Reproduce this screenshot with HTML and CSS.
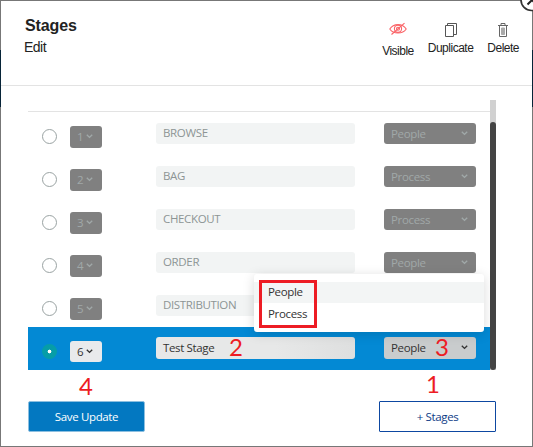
FILE: index.html
```html
<!DOCTYPE html>
<html lang="en">
<head>
<meta charset="utf-8">
<title>Stages</title>
<link rel="stylesheet" href="styles.css">
</head>
<body>
<svg class="defs" width="0" height="0"><symbol id="chev" viewBox="0 0 7 5"><path d="M.8 .8 3.5 3.4 6.2 .8" fill="none" stroke="currentColor" stroke-width="1.4"/></symbol></svg>
<main class="modal">
  <header class="header">
    <div class="titles"><h1>Stages</h1><p>Edit</p></div>
    <div class="actions">
      <div class="action visible">
        <svg width="18" height="14" viewBox="0 0 18 14" fill="none" stroke="#fa6468" stroke-width="1.1"><path d="M.8 7C4.5 1.1 13.500 1.100 17.200 7C13.500 12.400 4.500 12.400.8 7Z"/><circle cx="9" cy="6.800" r="3.600"/><circle cx="9" cy="6.800" r="1.500"/><path d="M2.500 12.500 15.500 1.200"/></svg>
        <span>Visible</span>
      </div>
      <div class="action duplicate">
        <svg width="12" height="14" viewBox="0 0 12 14" fill="none" stroke="#555" stroke-width="1"><path d="M.5 2.500h8v11h-8zM2.500 2V.5h9v11H9"/></svg>
        <span>Duplicate</span>
      </div>
      <div class="action delete">
        <svg width="10" height="14" viewBox="0 0 10 14" fill="none" stroke="#666"><path d="M0 2.500h10M3 2V.5h4V2M1.500 3v10.500h7V3"/><path d="M3.500 5h3v6.500h-3z" fill="#aaa" stroke="#aaa"/></svg>
        <span>Delete</span>
      </div>
    </div>
  </header>
  <section class="list">
    <div class="rows">
      <div class="row"><i class="radio"></i><div class="num">1<svg><use href="#chev"/></svg></div><div class="name">BROWSE</div><div class="type">People<svg><use href="#chev"/></svg></div></div>
      <div class="row"><i class="radio"></i><div class="num">2<svg><use href="#chev"/></svg></div><div class="name">BAG</div><div class="type">Process<svg><use href="#chev"/></svg></div></div>
      <div class="row"><i class="radio"></i><div class="num">3<svg><use href="#chev"/></svg></div><div class="name">CHECKOUT</div><div class="type">Process<svg><use href="#chev"/></svg></div></div>
      <div class="row"><i class="radio"></i><div class="num">4<svg><use href="#chev"/></svg></div><div class="name">ORDER</div><div class="type">People<svg><use href="#chev"/></svg></div></div>
      <div class="row"><i class="radio"></i><div class="num">5<svg><use href="#chev"/></svg></div><div class="name">DISTRIBUTION</div><div class="type">People<svg><use href="#chev"/></svg></div></div>
      <div class="row active"><i class="radio"></i><div class="num">6<svg><use href="#chev"/></svg></div><div class="name">Test Stage</div><div class="type">People<svg><use href="#chev"/></svg></div></div>
    </div>
    <div class="scroll"><div class="thumb"></div></div>
  </section>
  <footer class="footer"><div class="btn save">Save Update</div><div class="btn add">+ Stages</div></footer>
</main>
<div class="menu"><div class="option chosen">People</div><div class="option">Process</div></div>
<div class="frame"></div>
<span class="mark m1">1</span><span class="mark m2">2</span><span class="mark m3">3</span><span class="mark m4">4</span>
<div class="backdrop"></div>
<svg class="close" width="13" height="14" viewBox="0 0 13 14"><circle cx="11.500" cy="0" r="10.500" fill="#fff" stroke="#333" stroke-width="1.700"/><path d="M7.500 4.500 15-3M8-4 16 4" stroke="#222" stroke-width="2"/></svg>
</body>
</html>
```
FILE: styles.css
```css
* { box-sizing: border-box; }
body { margin: 0; width: 533px; height: 447px; overflow: hidden; padding: 1px; background: #777; position: relative; font: 11.5px/15px "Open Sans", sans-serif; letter-spacing: -.35px; color: #333; }
.defs { position: absolute; }
.modal { height: 445px; background: #fff; }
.header { height: 85px; border-bottom: 1px solid #e3e3e3; display: flex; justify-content: space-between; padding: 15px 13px 0 23px; font-family: "Liberation Sans", Arial, sans-serif; color: #222; }
h1 { margin: 0 0 0 1px; font-size: 16px; line-height: 20px; letter-spacing: -.1px; }
p { margin: 3px 0 0; font-size: 14px; line-height: 17px; letter-spacing: -.5px; }
.actions { display: flex; gap: 14px; font-size: 12px; line-height: 14px; letter-spacing: -.5px; }
.action { display: flex; flex-direction: column; align-items: center; padding-top: 7px; gap: 4px; }
.visible { padding-top: 6px; gap: 8px; }
.action svg { display: block; }
.list { display: flex; height: 270px; margin: 14px 0 0 27px; }
.rows { width: 462px; padding-top: 11px; }
.row { height: 43px; display: grid; grid-template-columns: 28px 86px 228px 92px; padding: 11px 0 0 14px; color: #8d9595; align-items: start; }
.row:first-child { height: 44px; border-top: 1px solid #e3e3e3; }
.radio { width: 15px; height: 15px; border: 1px solid #9aa3a3; border-radius: 50%; margin-top: 6px; }
.num, .type { background: #808080; color: #a0a8a8; border-radius: 3px; display: flex; align-items: center; }
.num { width: 32px; height: 22px; margin-top: 3px; padding: 0 0 1px 7px; gap: 3px; }
.name { width: 199px; height: 21px; line-height: 19px; padding-left: 7px; background: #f2f4f4; border-radius: 3px; }
.type { width: 92px; height: 21px; padding: 0 8px 1px 7px; justify-content: space-between; }
.num svg, .type svg { width: 7px; height: 5px; }
.active { background: #0389d4; padding-top: 10px; }
.active .radio { border: 0; background: radial-gradient(circle, #fff 0 1.6px, #069da7 2.2px); margin-top: 7px; }
.active .num { background: #e9eaec; color: #333; margin-top: 4px; height: 21px; }
.active .name { background: linear-gradient(90deg, #e7e8e8 60%, #dedfdf); color: #333; height: 22px; line-height: 21px; }
.active .type { background: #c9cccd; color: #333; height: 22px; }
.scroll { width: 6px; background: #d1d1d1; padding-top: 22px; }
.thumb { height: 248px; background: #444; border-radius: 3px; }
.footer { display: flex; justify-content: space-between; padding: 31px 36px 0 27px; }
.btn { height: 31px; width: 117px; border: 1px solid #0d47a1; color: #0d3b86; border-radius: 1px; display: flex; align-items: center; justify-content: center; }
.save { background: #0378c1; border-color: #8cbfe0; color: #fff; border-radius: 2px; }
.menu { position: absolute; left: 254px; top: 274px; width: 230px; height: 58px; background: #fff; border-radius: 3px; padding-top: 8px; box-shadow: 0 2px 12px #00000026; }
.option { height: 21px; line-height: 19px; padding-left: 14px; margin-bottom: 1px; }
.chosen { background: #f3f5f5; }
.frame { position: absolute; left: 259px; top: 280px; width: 58px; height: 48px; border: 3px solid #ed1c24; }
.mark { position: absolute; color: #ed1c24; font: 24px/24px Lato, sans-serif; letter-spacing: 0; }
.m1 { left: 426px; top: 372px; }
.m2 { left: 229px; top: 335px; }
.m3 { left: 435px; top: 335px; }
.m4 { left: 79px; top: 374px; }
.backdrop { position: absolute; inset: 0; pointer-events: none; background: linear-gradient(#777 0 50px, #072438 50px 107px, #777 107px) left / 1px 100% no-repeat, linear-gradient(#777 0 50px, #072438 50px 107px, #777 107px) right / 1px 100% no-repeat; }
.close { position: absolute; left: 520px; top: 0; }
```
